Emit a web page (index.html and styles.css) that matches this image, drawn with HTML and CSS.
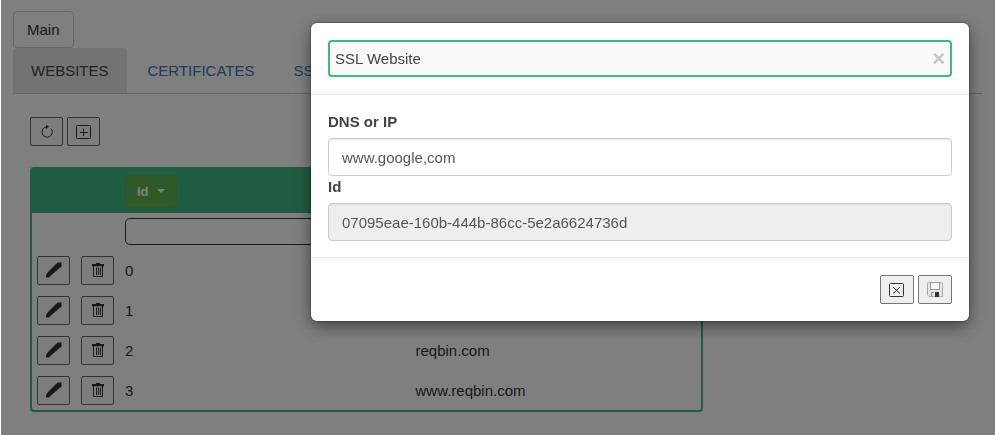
FILE: index.html
```html
<!DOCTYPE html>
<html lang="en">
<head>
<meta charset="utf-8">
<title>Websites</title>
<link rel="stylesheet" href="styles.css">
</head>
<body>
<svg class="sprite" aria-hidden="true">
  <symbol id="reload" viewBox="0 0 16 16"><path d="M8 2.800A5.200 5.200 0 1 0 12 4.500" fill="none" stroke="currentColor"/><path d="M7 0.700 10 2.800 7 5Z" fill="currentColor"/></symbol>
  <symbol id="plus" viewBox="0 0 16 16"><rect x="0.5" y="1.5" width="14" height="13" rx="1" fill="none" stroke="currentColor"/><path d="M4 8.5H12M7.5 4.5V12" fill="none" stroke="currentColor"/></symbol>
  <symbol id="edit" viewBox="0 0 16 16"><path d="M0 15.500V13L2 10 10 2 12 .5H15.500V4.500L5.500 13 3 15.500Z" fill="currentColor"/></symbol>
  <symbol id="trash" viewBox="0 0 16 16"><path d="M2 2H6V1H10V2H14V4.200H2Z" fill="currentColor"/><path d="M3.500 4V14.500H12.500V4M6.500 5.500V13M8.500 5.500V13M10.500 5.500V13" fill="none" stroke="currentColor"/></symbol>
  <symbol id="cross" viewBox="0 0 16 16"><rect x="0.5" y="1.500" width="14" height="13" rx="1" fill="none" stroke="currentColor"/><path d="M4 5 11 11.500M11 5 4 11.500" fill="none" stroke="currentColor"/></symbol>
  <symbol id="save" viewBox="0 0 16 16"><path d="M.5 1.500Q.5 .5 1.500 .5H14.500Q15.500 .5 15.500 1.500V14.500H2L.5 13Z" fill="#e4e4e4" stroke="#aaa"/><rect x="3.500" y="0.500" width="9" height="7" fill="#f7f7f7" stroke="#999"/><path d="M4.500 14.500V10.500H7" fill="none" stroke="#888"/><rect x="8" y="10" width="4" height="5" fill="#333"/></symbol>
</svg>

<div class="page">
  <button class="btn main-btn" type="button">Main</button>
  <nav class="tabs">
    <a class="tab active" href="#websites">WEBSITES</a>
    <a class="tab" href="#certificates">CERTIFICATES</a>
    <a class="tab" href="#ssl">SSL</a>
  </nav>
  <main class="panel">
    <div class="toolbar">
      <button class="icon-btn" type="button" aria-label="Reload"><svg class="icon"><use href="#reload"/></svg></button>
      <button class="icon-btn" type="button" aria-label="Add"><svg class="icon"><use href="#plus"/></svg></button>
    </div>
    <table class="grid">
      <colgroup><col class="col-action"><col class="col-action"><col><col></colgroup>
      <thead>
        <tr><td></td><td></td><th scope="col"><button class="sort" type="button">Id <span class="caret"></span></button></th><td></td></tr>
      </thead>
      <tbody>
        <tr class="filter"><td></td><td></td><td><input class="filter-input" type="text" aria-label="Filter by Id"></td><td></td></tr>
        <tr>
          <td><button class="icon-btn" type="button" aria-label="Edit"><svg class="icon"><use href="#edit"/></svg></button></td>
          <td><button class="icon-btn" type="button" aria-label="Delete"><svg class="icon"><use href="#trash"/></svg></button></td>
          <td>0</td><td></td>
        </tr>
        <tr>
          <td><button class="icon-btn" type="button" aria-label="Edit"><svg class="icon"><use href="#edit"/></svg></button></td>
          <td><button class="icon-btn" type="button" aria-label="Delete"><svg class="icon"><use href="#trash"/></svg></button></td>
          <td>1</td><td></td>
        </tr>
        <tr>
          <td><button class="icon-btn" type="button" aria-label="Edit"><svg class="icon"><use href="#edit"/></svg></button></td>
          <td><button class="icon-btn" type="button" aria-label="Delete"><svg class="icon"><use href="#trash"/></svg></button></td>
          <td>2</td><td>reqbin.com</td>
        </tr>
        <tr>
          <td><button class="icon-btn" type="button" aria-label="Edit"><svg class="icon"><use href="#edit"/></svg></button></td>
          <td><button class="icon-btn" type="button" aria-label="Delete"><svg class="icon"><use href="#trash"/></svg></button></td>
          <td>3</td><td>www.reqbin.com</td>
        </tr>
      </tbody>
    </table>
  </main>
</div>

<div class="backdrop">
  <form class="modal" role="dialog" aria-labelledby="modal-title">
    <header class="modal-header">
      <div class="title-box">
        <span id="modal-title">SSL Website</span>
        <button class="close" type="button" aria-label="Close">×</button>
      </div>
    </header>
    <div class="modal-body">
      <label for="dns">DNS or IP</label>
      <input class="field" id="dns" type="text" value="www.google,com">
      <label for="id">Id</label>
      <input class="field" id="id" type="text" value="07095eae-160b-444b-86cc-5e2a6624736d" readonly>
    </div>
    <footer class="modal-footer">
      <button class="icon-btn" type="button" aria-label="Cancel"><svg class="icon"><use href="#cross"/></svg></button>
      <button class="icon-btn" type="submit" aria-label="Save"><svg class="icon"><use href="#save"/></svg></button>
    </footer>
  </form>
</div>
</body>
</html>
```
FILE: styles.css
```css
* { box-sizing: border-box; }
body {
  margin: 0;
  background: #fff;
  color: #333;
  font: 15px/21px "Liberation Sans", Arial, sans-serif;
}
button, input { font: inherit; color: inherit; }
.sprite { display: none; }
.page { padding: 11px 13px; }

.btn {
  display: block;
  padding: 7px 13px;
  border: 1px solid #ccc;
  border-radius: 4px;
  background: #fff;
}
.tabs {
  display: flex;
  gap: 3px;
  border-bottom: 1px solid #ccc;
}
.tab {
  padding: 12px 18px;
  border-radius: 4px 4px 0 0;
  color: #337ab7;
  text-decoration: none;
}
.tab.active { background: #e7e7e7; color: #444; }

.panel { padding: 23px 17px; }
.toolbar { display: flex; gap: 4px; margin-bottom: 21px; }
.icon-btn {
  display: flex;
  align-items: center;
  justify-content: center;
  width: 33px;
  height: 29px;
  padding: 0;
  border: 1px solid #767676;
  border-radius: 2px;
  background: #efefef;
  color: #333;
}
.icon { display: block; width: 16px; height: 16px; }

.grid {
  width: 100%;
  max-width: 673px;
  table-layout: fixed;
  border: 2px solid #41b883;
  border-radius: 4px;
  border-spacing: 0;
}
.col-action { width: 44px; }
.grid td, .grid th { height: 40px; padding: 5px; text-align: left; }
.grid thead td, .grid thead th { height: 44px; background: #41b883; }
.grid .filter td { height: 37px; }
.page .icon-btn { border-color: #666; background: #fbfbfb; }
.sort {
  display: flex;
  align-items: center;
  gap: 8px;
  padding: 5px 11px;
  border: 1px solid #56b04c;
  border-radius: 4px;
  background: #5bb54e;
  color: #fff;
  font-size: 13px;
  font-weight: bold;
}
.caret {
  border: 4px solid transparent;
  border-top-color: currentColor;
  border-bottom: 0;
}
.filter-input {
  display: block;
  width: 100%;
  height: 27px;
  padding: 0 6px;
  border: 1px solid #333;
  border-radius: 5px;
  background: #fff;
}

.backdrop {
  position: fixed;
  inset: 0 0 0 1px;
  display: flex;
  align-items: flex-start;
  justify-content: flex-end;
  padding: 23px 26px;
  background: rgba(0, 0, 0, 0.5);
}
.modal {
  width: 100%;
  max-width: 658px;
  border-radius: 6px;
  background: #fff;
  color: #444;
  box-shadow: 0 5px 16px rgba(0, 0, 0, 0.5), 0 0 1px 1px rgba(0, 0, 0, 0.2);
}
.modal-header { padding: 17px; border-bottom: 1px solid #e5e5e5; }
.title-box {
  display: flex;
  align-items: center;
  justify-content: space-between;
  height: 37px;
  padding: 0 5px;
  border: 2px solid #41b883;
  border-radius: 4px;
  background: #f9f9f9;
}
.close {
  padding: 0;
  border: 0;
  background: none;
  color: #c6c6c6;
  font-size: 22px;
  font-weight: bold;
}
.modal-body { padding: 16px 17px; }
.modal-body label { display: block; height: 27px; font-weight: bold; }
.field {
  display: block;
  width: 100%;
  height: 38px;
  padding: 0 13px;
  border: 1px solid #ccc;
  border-radius: 4px;
  background: #fff;
  color: #555;
  box-shadow: inset 0 1px 1px rgba(0, 0, 0, 0.08);
}
.field:read-only { background: #eee; }
.modal-footer {
  display: flex;
  justify-content: flex-end;
  gap: 4px;
  padding: 17px;
  border-top: 1px solid #e5e5e5;
}
.modal-footer .icon-btn { width: 34px; }
```
